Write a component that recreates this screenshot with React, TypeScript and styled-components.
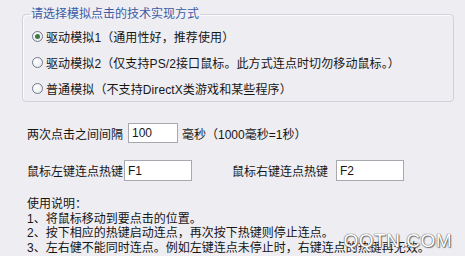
import React from 'react'
import styled, { createGlobalStyle } from 'styled-components'

const Global = createGlobalStyle`
  html, body {
    margin: 0;
    padding: 0;
    background: #eeedf2;
  }
  body {
    font-family: "Liberation Sans", "Noto Sans CJK SC", sans-serif;
    font-size: 12px;
    color: #161616;
  }
`

const options = [
  '驱动模拟1（通用性好，推荐使用）',
  '驱动模拟2（仅支持PS/2接口鼠标。此方式连点时切勿移动鼠标。）',
  '普通模拟（不支持DirectX类游戏和某些程序）',
]

const tips = [
  '1、将鼠标移动到要点击的位置。',
  '2、按下相应的热键启动连点，再次按下热键则停止连点。',
  '3、左右健不能同时连点。例如左键连点未停止时，右键连点的热键再无效。',
]

export default function App() {
  return (<S.Page>
    <Global />
    <S.Group>
      <S.Legend>请选择模拟点击的技术实现方式</S.Legend>
      {
        options.map((text, i) => (
          <S.RadioRow key={i}>
            <S.Radio checked={i === 0} />
            <span>{text}</span>
          </S.RadioRow>
        ))
      }
    </S.Group>

    <S.Form>
      <S.FieldRow>
        <S.Label>两次点击之间间隔</S.Label>
        <S.Input width={50} height={20} gap={5}>100</S.Input>
        <S.Label gap={4}>毫秒（1000毫秒=1秒）</S.Label>
      </S.FieldRow>

      <S.FieldRow top={17}>
        <S.Label>鼠标左键连点热键</S.Label>
        <S.Input width={68} height={21} gap={1}>F1</S.Input>
        <S.Label gap={40}>鼠标右键连点热键</S.Label>
        <S.Input width={68} height={21} gap={8}>F2</S.Input>
      </S.FieldRow>

      <S.Notes>
        <div>使用说明：</div>
        {
          tips.map((t, i) => <div key={i}>{t}</div>)
        }
      </S.Notes>
    </S.Form>

    <S.Watermark>QQTN.COM</S.Watermark>
  </S.Page>)
}

const S = {
  Page: styled.div`
    position: relative;
    width: 465px;
    height: 256px;
    overflow: hidden;
    background: #eeedf2;
  `,
  Group: styled.fieldset`
    box-sizing: border-box;
    margin: 7px 11px 0 22px;
    padding: 2px 0 0 9px;
    height: 95px;
    border: 1px solid #d2d0da;
    border-radius: 4px;
    box-shadow: inset 1px 1px 0 #fbfbfd;
  `,
  Legend: styled.legend`
    padding: 0 1px;
    margin-left: -2px;
    line-height: 14px;
    color: #3a5ca6;
  `,
  RadioRow: styled.div`
    display: flex;
    align-items: center;
    height: 26px;
    gap: 3px;
    white-space: nowrap;
    letter-spacing: 0.1px;
  `,
  Radio: styled.span<{ checked?: boolean }>`
    position: relative;
    width: 11px;
    height: 11px;
    border-radius: 50%;
    border: 1px solid #6d7a8c;
    box-sizing: border-box;
    background: radial-gradient(circle at 35% 35%, #ffffff 0%, #e6e6ea 100%);
    flex: none;
    &::after {
      content: '';
      display: ${p => p.checked ? 'block' : 'none'};
      position: absolute;
      left: 2px;
      top: 2px;
      width: 5px;
      height: 5px;
      border-radius: 50%;
      background: #3f7a3f;
    }
  `,
  Form: styled.div`
    padding: 21px 0 0 27px;
  `,
  FieldRow: styled.div<{ top?: number }>`
    display: flex;
    align-items: center;
    margin-top: ${p => p.top || 0}px;
    white-space: nowrap;
  `,
  Label: styled.span<{ gap?: number }>`
    margin-left: ${p => p.gap || 0}px;
  `,
  Input: styled.div<{ width: number, height: number, gap: number }>`
    box-sizing: border-box;
    width: ${p => p.width}px;
    height: ${p => p.height}px;
    margin-left: ${p => p.gap}px;
    padding: 0 3px;
    display: flex;
    align-items: center;
    background: #ffffff;
    border: 1px solid #a7a9b0;
    font-size: 12px;
  `,
  Notes: styled.div`
    margin-top: 16px;
    line-height: 14.5px;
    white-space: nowrap;
  `,
  Watermark: styled.div`
    position: absolute;
    right: 13px;
    bottom: 4px;
    font-family: "Liberation Sans", sans-serif;
    font-size: 19px;
    letter-spacing: 0.5px;
    color: #ffffff;
    text-shadow: 0 0 1px #555, 0 0 1px #555, 1px 1px 1px #777;
  `
}
